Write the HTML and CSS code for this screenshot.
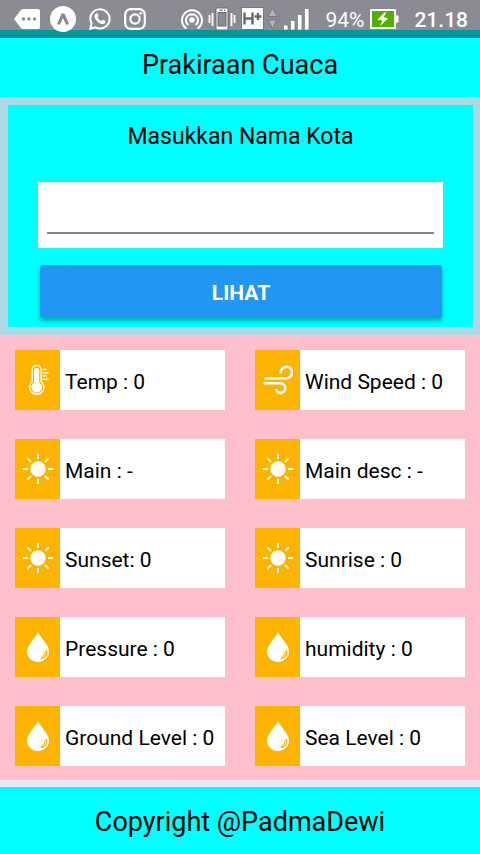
FILE: index.html
```html
<!DOCTYPE html>
<html lang="id">
<head>
<meta charset="utf-8">
<meta name="viewport" content="width=device-width, initial-scale=1">
<title>Prakiraan Cuaca</title>
<link rel="stylesheet" href="styles.css">
</head>
<body>
<svg class="sprite" aria-hidden="true">
  <symbol id="thermometer" viewBox="0 0 30 30">
    <path d="M9.200 16.500V5a4.500 4.500 0 0 1 9 0v11.500a7.200 7.200 0 1 1-9 0Z" fill="none" stroke="#fff" stroke-width="1.400"/>
    <path d="M13.700 5.500v16" stroke="#fff" stroke-width="5" stroke-linecap="round"/>
    <circle cx="13.700" cy="22.200" r="5.300" fill="#fff"/>
    <path d="M19.500 4.500h4M19.500 7.800h6M19.500 11h4M19.500 14.200h6" stroke="#fff" stroke-width="1.400"/>
  </symbol>
  <symbol id="wind" viewBox="0 0 30 30">
    <path d="M1.500 13.200h22a5.700 5.700 0 1 0-5.600-4.600M.500 18.300h17a4.800 4.800 0 1 1-4.700 5.800" fill="none" stroke="#fff" stroke-width="2.600"/>
  </symbol>
  <symbol id="sun" viewBox="0 0 30 30">
    <circle cx="15" cy="15" r="7.700" fill="#fff"/>
    <path d="M15 0v5M15 25v5M0 15h5M25 15h5M4.400 4.400l3.500 3.500M22.100 22.100l3.500 3.500M4.400 25.600l3.500-3.500M22.100 7.900l3.500-3.500" stroke="#fff" stroke-width="2"/>
  </symbol>
  <symbol id="drop" viewBox="0 0 30 30">
    <path d="M15 0C13 5 4 13 4 19.500a11 10.500 0 0 0 22 0C26 13 17 5 15 0Z" fill="#fff"/>
    <path d="M23.800 18.500c.7 4-1.500 7-5.500 8.300 0-1.200.3-1.500 1.200-2.200 1.500-1 2.300-2.300 2.500-4 .2-1.200.7-2 1.800-2.100Z" fill="none" stroke="#fdb400" stroke-width="1.100"/>
  </symbol>
</svg>

<div class="status">
  <div class="group left">
    <svg width="26" height="20" viewBox="0 0 26 20"><path d="M0 10 6.500 1.500Q7.500 0 9 0H24q2 0 2 2v16q0 2-2 2H9q-1.500 0-2.500-1.500Z" fill="#fff"/><g fill="#8b8b93"><circle cx="9.500" cy="10" r="1.700"/><circle cx="15" cy="10" r="1.700"/><circle cx="20.500" cy="10" r="1.700"/></g></svg>
    <svg width="26" height="26" viewBox="0 0 26 26"><circle cx="13" cy="13" r="13" fill="#fff"/><path d="M7 18.300 11.600 7.500h2.800L19 18.300l-2.800.5L13 12l-3.200 6.800Z" fill="#85858d"/></svg>
    <svg class="app" width="22" height="22" viewBox="0 0 22 22"><path d="M1.300 20.700 2.600 15.500A9.600 9.600 0 1 1 6.500 19.300Z" fill="none" stroke="#fff" stroke-width="2"/><path d="M7 5.500c.8-.5 1.500-.4 1.800.3l.8 1.900c.2.500-.8 1.300-.9 1.700.9 1.800 2 2.800 3.800 3.600.6-.2 1.100-1.500 1.700-1.300l2.200 1.100c.5.400-.1 2.300-1.100 2.900-3.500 1.700-9.700-3.200-9.800-7.500 0-1 .7-2.100 1.500-2.700Z" fill="#fff"/></svg>
    <svg class="app" width="22" height="22" viewBox="0 0 22 22"><rect x="1.200" y="1.200" width="19.600" height="19.600" rx="5.500" fill="none" stroke="#fff" stroke-width="2.200"/><circle cx="11" cy="11" r="4.700" fill="none" stroke="#fff" stroke-width="2.200"/><circle cx="16.700" cy="5.300" r="1.400" fill="#fff"/></svg>
  </div>
  <div class="group right">
    <svg width="22" height="22" viewBox="0 0 22 22"><circle cx="11" cy="12" r="2.800" fill="#fff"/><path d="M7.500 17a6 6 0 1 1 7 0M5.500 20.500a10 10 0 1 1 11 0" fill="none" stroke="#fff" stroke-width="2"/></svg>
    <svg width="28" height="24" viewBox="0 0 28 24"><rect x="8" y="1" width="12" height="22" rx="1" fill="#fff" stroke="#68686e"/><rect x="10" y="5.500" width="8" height="13.500" fill="#8b8b93" stroke="#68686e"/><path d="M11 3.200h4M16 3.200h1.500" stroke="#68686e"/><path d="M1.500 8v8M4.500 6v13M23.500 6v13M26.500 8v8" stroke="#fff" stroke-width="1.800"/></svg>
    <svg width="37" height="24" viewBox="0 0 37 24"><rect x=".5" y=".5" width="22" height="22" fill="#fff" stroke="#77777d"/><path d="M3.500 5.500v12M11.500 5.500v12M4 11.500h7M13.500 9.500h7M17 6v7" stroke="#68686e" stroke-width="2.400"/><path d="M27 9.500 31.500 1 36 9.500ZM27 13h9l-4.500 8.500Z" fill="#b2b2b5" stroke="#77777d"/></svg>
    <svg width="27" height="24" viewBox="0 0 27 24"><g fill="#fff" stroke="#77777d" stroke-width=".7"><rect x=".5" y="18" width="4.500" height="5" rx="1"/><rect x="7.500" y="13.500" width="4.500" height="9.500" rx="1"/><rect x="14.500" y="7.500" width="4.500" height="15.500" rx="1"/><rect x="21.500" y="1.500" width="4.500" height="21.500" rx="1"/></g></svg>
    <span class="percent">94%</span>
    <svg width="30" height="22" viewBox="0 0 30 22"><path d="M.5.500h27v6.500H30v8h-2.500v6.500H.500Z" fill="#fff" stroke="#77777d" stroke-width=".8"/><rect x="3" y="3" width="22" height="16" fill="#54b000"/><path d="m15.500 4.500-7 7 5 1-2.500 5.500 8-7.500-4.500-1.500 3-4.500Z" fill="#fff"/></svg>
    <time class="clock">21.18</time>
  </div>
</div>

<header class="bar"><h1>Prakiraan Cuaca</h1></header>

<main>
  <form class="search">
    <label for="city">Masukkan Nama Kota</label>
    <div class="field"><input id="city" type="text"></div>
    <button type="button">LIHAT</button>
  </form>

  <section class="cards">
    <div class="card"><span class="icon"><svg><use href="#thermometer"/></svg></span><p>Temp : 0</p></div>
    <div class="card"><span class="icon"><svg><use href="#wind"/></svg></span><p>Wind Speed : 0</p></div>
    <div class="card"><span class="icon"><svg><use href="#sun"/></svg></span><p>Main : -</p></div>
    <div class="card"><span class="icon"><svg><use href="#sun"/></svg></span><p>Main desc : -</p></div>
    <div class="card"><span class="icon"><svg><use href="#sun"/></svg></span><p>Sunset: 0</p></div>
    <div class="card"><span class="icon"><svg><use href="#sun"/></svg></span><p>Sunrise : 0</p></div>
    <div class="card"><span class="icon"><svg><use href="#drop"/></svg></span><p>Pressure : 0</p></div>
    <div class="card"><span class="icon"><svg><use href="#drop"/></svg></span><p>humidity : 0</p></div>
    <div class="card"><span class="icon"><svg><use href="#drop"/></svg></span><p>Ground Level : 0</p></div>
    <div class="card"><span class="icon"><svg><use href="#drop"/></svg></span><p>Sea Level : 0</p></div>
  </section>
</main>

<footer class="bar">Copyright @PadmaDewi</footer>
</body>
</html>
```
FILE: styles.css
```css
* {
  box-sizing: border-box;
}

body {
  margin: 0;
  min-height: 100vh;
  display: flex;
  flex-direction: column;
  background: #e6e6fa;
  color: #000;
  font-family: Roboto, "Liberation Sans", sans-serif;
}

h1,
p {
  margin: 0;
  font-weight: 400;
}

.sprite {
  position: absolute;
  width: 0;
  height: 0;
}

.status {
  display: flex;
  justify-content: space-between;
  align-items: center;
  height: 38px;
  padding: 0 12px 0 14px;
  background: linear-gradient(#8b8b93 30px, #009999 30px);
  color: #fff;
  font-size: 21px;
}

.group {
  display: flex;
  align-items: center;
}

.group.left {
  gap: 10px;
}

.group.right {
  gap: 5px;
}

.app {
  margin-left: 3px;
}

.percent,
.clock {
  margin-left: 10px;
  line-height: 24px;
  padding-top: 2px;
}

.clock {
  font-weight: 500;
}

.bar {
  display: flex;
  justify-content: center;
  align-items: center;
  background: #00ffff;
  font-size: 27px;
}

.bar h1 {
  font-size: 27px;
}

header.bar {
  height: 59px;
  padding-bottom: 6px;
}

footer.bar {
  flex: 1;
  min-height: 67px;
  margin-top: 7px;
  padding-top: 2px;
}

.search {
  display: flex;
  flex-direction: column;
  padding: 16px 30px 9px;
  border: 8px solid #add8e6;
  border-right-width: 7px;
  background: #00ffff;
}

.search label {
  line-height: 32px;
  font-size: 23px;
  text-align: center;
}

.field {
  margin-top: 29px;
  padding: 8px 9px 14px;
  background: #fff;
}

.field input {
  display: block;
  width: 100%;
  height: 44px;
  padding: 0;
  border: 0;
  border-bottom: 2px solid #848484;
  outline: 0;
  background: none;
  font: inherit;
  font-size: 23px;
}

.search button {
  height: 53px;
  margin: 17px 1px 0 2px;
  padding: 2px 0 0;
  border: 0;
  border-radius: 3px;
  background: #2196f3;
  box-shadow: 0 3px 4px rgba(0, 0, 0, 0.3);
  color: #fff;
  font: 700 21px Roboto, "Liberation Sans", sans-serif;
}

.cards {
  display: grid;
  grid-template-columns: 1fr 1fr;
  gap: 29px 30px;
  padding: 15px 15px 14px;
  background: #ffc0cb;
}

.card {
  display: flex;
  height: 60px;
  background: #fff;
}

.icon {
  display: flex;
  flex: none;
  justify-content: center;
  align-items: center;
  width: 45px;
  background: #fdb400;
}

.icon svg {
  width: 30px;
  height: 30px;
}

.card p {
  padding: 2px 0 0 5px;
  line-height: 60px;
  font-size: 21px;
  white-space: nowrap;
}
```
